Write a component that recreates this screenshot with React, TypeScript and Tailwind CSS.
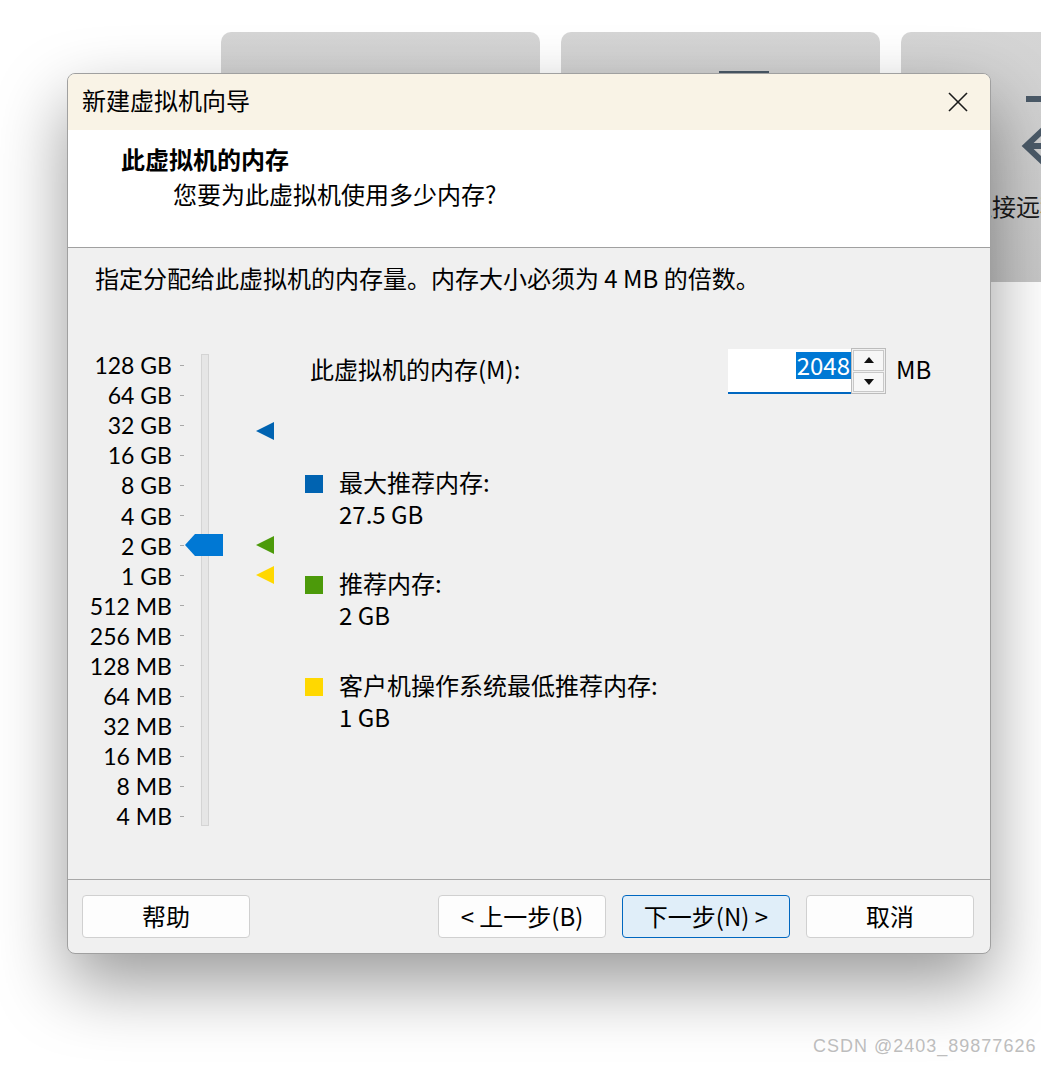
import React from "react";

const labels = [
  "128 GB",
  "64 GB",
  "32 GB",
  "16 GB",
  "8 GB",
  "4 GB",
  "2 GB",
  "1 GB",
  "512 MB",
  "256 MB",
  "128 MB",
  "64 MB",
  "32 MB",
  "16 MB",
  "8 MB",
  "4 MB",
];

function Marker({ color, className }: { color: string; className: string }) {
  return (
    <svg className={className} width="18" height="18" viewBox="0 0 18 18">
      <polygon points="0,9 18,0 18,18" fill={color} />
    </svg>
  );
}

function Btn({
  children,
  primary,
}: {
  children: React.ReactNode;
  primary?: boolean;
}) {
  return (
    <div
      className={
        primary
          ? "w-[168px] h-[43px] rounded-[4px] border border-[#0067c0] bg-[#e0eef9] flex items-center justify-center leading-[32px] pb-[2px]"
          : "w-[168px] h-[43px] rounded-[4px] border border-[#d0d0d0] bg-[#fdfdfd] flex items-center justify-center leading-[32px] pb-[2px]"
      }
    >
      {children}
    </div>
  );
}

function Legend({
  color,
  title,
  value,
  className,
}: {
  color: string;
  title: string;
  value: string;
  className: string;
}) {
  return (
    <div className={"flex " + className}>
      <div className="h-[32px] mt-[2px] flex items-center">
        <div className="w-[18px] h-[18px]" style={{ backgroundColor: color }} />
      </div>
      <div className="ml-[16px] text-[24px] leading-[32px]">
        <div>{title}</div>
        <div>{value}</div>
      </div>
    </div>
  );
}

export default function App() {
  return (
    <div className="relative w-[1041px] h-[1065px] overflow-hidden bg-white font-['Noto_Sans_CJK_SC',sans-serif] text-black">
      {/* background cards (windows behind) */}
      <div className="absolute left-[221px] top-[32px] w-[319px] h-[250px] rounded-[10px] bg-gradient-to-b from-[#d5d5d5] to-[#c8c8c8]" />
      <div className="absolute left-[561px] top-[32px] w-[319px] h-[250px] rounded-[10px] bg-gradient-to-b from-[#d5d5d5] to-[#c8c8c8]">
        <div className="absolute left-[158px] top-[39px] w-[50px] h-[10px] bg-[#4b5a68]" />
      </div>
      <div className="absolute left-[901px] top-[32px] w-[319px] h-[250px] rounded-[10px] bg-gradient-to-b from-[#d5d5d5] to-[#c8c8c8]">
        <svg
          className="absolute left-[118px] top-[60px]"
          width="70"
          height="80"
          viewBox="0 0 70 80"
        >
          <rect x="7" y="4" width="60" height="6" fill="#4b5a68" />
          <polyline
            points="26,36 7,54 26,72"
            fill="none"
            stroke="#4b5a68"
            strokeWidth="6"
          />
          <line x1="9" y1="54" x2="60" y2="54" stroke="#4b5a68" strokeWidth="6" />
        </svg>
        <div className="absolute left-[67px] top-[158px] text-[24px] leading-[32px] text-[#1a1a1a] whitespace-nowrap">
          连接远程服务器
        </div>
      </div>

      {/* dialog */}
      <div className="absolute left-[67px] top-[73px] w-[924px] h-[881px] rounded-[8px] border border-[#a0a0a0] bg-[#f0f0f0] overflow-hidden flex flex-col shadow-[0_30px_70px_rgba(0,0,0,0.4)]">
        {/* title bar */}
        <div className="h-[56px] bg-[#f9f3e6] flex items-center pl-[14px] pr-[22px]">
          <div className="flex-1 text-[24px] leading-[32px] pb-[4px]">新建虚拟机向导</div>
          <svg width="20" height="20" viewBox="0 0 20 20">
            <line x1="1" y1="1" x2="19" y2="19" stroke="#1a1a1a" strokeWidth="1.6" />
            <line x1="19" y1="1" x2="1" y2="19" stroke="#1a1a1a" strokeWidth="1.6" />
          </svg>
        </div>

        {/* header */}
        <div className="h-[118px] bg-white border-b border-[#a0a0a0] pt-[13px] pl-[53px]">
          <div className="text-[24px] leading-[32px] font-bold">此虚拟机的内存</div>
          <div className="mt-[3px] ml-[52px] text-[24px] leading-[32px]">
            您要为此虚拟机使用多少内存?
          </div>
        </div>

        {/* body */}
        <div className="h-[632px] border-b border-[#a8a8a8] pt-[14px]">
          <div className="pl-[27px] text-[24px] leading-[32px] whitespace-nowrap">
            指定分配给此虚拟机的内存量。内存大小必须为 4 MB 的倍数。
          </div>

          <div className="mt-[55px] flex">
            {/* slider */}
            <div className="relative w-[237px] mt-[1px] flex">
              <div className="w-[104px] flex flex-col font-['Lato',sans-serif]">
                {labels.map((l) => (
                  <div
                    key={l}
                    className="h-[30.1px] flex items-center justify-end text-[23px] leading-[28px] whitespace-nowrap"
                  >
                    {l}
                  </div>
                ))}
              </div>
              <div className="ml-[8px] w-[4px] flex flex-col">
                {labels.map((l) => (
                  <div key={l} className="h-[30.1px] flex items-center">
                    <div className="w-[4px] h-[1px] bg-[#a8a8a8]" />
                  </div>
                ))}
              </div>
              <div className="ml-[17px] mt-[4px] w-[8px] h-[472px] bg-[#e6e6e6] border border-[#d4d4d4]" />

              <svg
                className="absolute left-[117px] top-[184px]"
                width="38"
                height="22"
                viewBox="0 0 38 22"
              >
                <polygon points="0,11 10,0 38,0 38,22 10,22" fill="#0078d4" />
              </svg>
              <Marker color="#0063b1" className="absolute left-[188px] top-[72px]" />
              <Marker color="#4c9a0a" className="absolute left-[188px] top-[186px]" />
              <Marker color="#ffd800" className="absolute left-[188px] top-[216px]" />
            </div>

            {/* right column */}
            <div className="flex flex-col">
              <div className="h-[45px] flex items-center">
                <div className="w-[423px] pl-[5px] text-[24px] leading-[32px] pb-[5px]">
                  此虚拟机的内存(M):
                </div>
                <div className="w-[123px] h-[45px] bg-white border-b-2 border-[#0067c0] flex justify-end pt-[3px]">
                  <span className="h-[27px] bg-[#0078d4] text-white text-[24px] leading-[26px] pl-[1px] pr-[1px]">
                    2048
                  </span>
                </div>
                <div className="w-[35px] h-[46px] border border-[#bcbcbc] bg-[#f0f0f0] flex flex-col -mt-[1px]">
                  <div className="flex-1 m-[1px] border border-[#c8c8c8] bg-[#f7f7f7] flex items-center justify-center">
                    <svg width="10" height="6" viewBox="0 0 10 6">
                      <polygon points="0,6 5,0 10,6" fill="#111" />
                    </svg>
                  </div>
                  <div className="flex-1 m-[1px] mt-0 border border-[#c8c8c8] bg-[#f7f7f7] flex items-center justify-center">
                    <svg width="10" height="6" viewBox="0 0 10 6">
                      <polygon points="0,0 10,0 5,6" fill="#111" />
                    </svg>
                  </div>
                </div>
                <div className="ml-[10px] text-[24px] leading-[32px] pb-[5px]">MB</div>
              </div>

              <Legend className="mt-[72px]" color="#0063b1" title="最大推荐内存:" value="27.5 GB" />
              <Legend className="mt-[37px]" color="#4c9a0a" title="推荐内存:" value="2 GB" />
              <Legend className="mt-[38px]" color="#ffd800" title="客户机操作系统最低推荐内存:" value="1 GB" />
            </div>
          </div>
        </div>

        {/* footer */}
        <div className="flex-1 pt-[15px] pl-[14px] pr-[16px] flex items-start text-[24px]">
          <Btn>帮助</Btn>
          <div className="flex-1" />
          <div className="flex gap-[16px]">
            <Btn>&lt; 上一步(B)</Btn>
            <Btn primary>下一步(N) &gt;</Btn>
            <Btn>取消</Btn>
          </div>
        </div>
      </div>

      {/* watermark */}
      <div className="absolute left-[813px] top-[1034px] font-['Liberation_Sans',sans-serif] text-[18px] leading-[24px] tracking-[1px] text-[#bdbdbd] whitespace-nowrap [text-shadow:1px_1px_0_#ffffff]">
        CSDN @2403_89877626
      </div>
    </div>
  );
}
